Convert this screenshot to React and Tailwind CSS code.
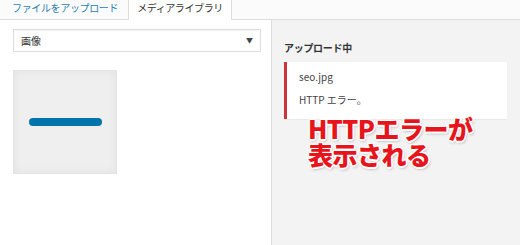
export default function App() {
  const font = { fontFamily: '"Noto Sans CJK JP", "Noto Sans", sans-serif' };

  return (
    <div className="w-[520px] h-[245px] flex flex-col bg-white overflow-hidden" style={font}>
      {/* tabs */}
      <div className="h-[20px] flex items-end bg-[#fbfbfb] border-b border-[#dddddd]">
        <div className="h-[19px] pl-[12px] pr-[10px] text-[10px] leading-[16px] tracking-[-0.35px] text-[#2a7fb0]">
          ファイルをアップロード
        </div>
        <div className="h-[20px] -mb-px px-[8px] bg-white border-x border-[#dddddd] text-[10px] leading-[16px] tracking-[-0.4px] text-[#333]">
          メディアライブラリ
        </div>
      </div>

      <div className="flex-1 flex">
        {/* library */}
        <div className="w-[272px] border-r border-[#dddddd] pl-[13px] pr-[10px] pt-[9px]">
          <div className="h-[23px] w-[248px] flex items-center justify-between px-[7px] border border-[#dddddd] bg-white shadow-[inset_0_1px_2px_rgba(0,0,0,0.05)]">
            <span className="text-[10px] text-[#333]">画像</span>
            <span className="text-[7px] text-[#444]">▼</span>
          </div>
          <div className="mt-[18px] w-[104px] h-[104px] flex items-center justify-center bg-[#efefef] border border-[#e4e4e4] shadow-[inset_0_0_10px_rgba(0,0,0,0.06)]">
            <div className="w-[73px] h-[8px] rounded-full bg-[#0073aa]" />
          </div>
        </div>

        {/* uploading */}
        <div className="relative flex-1 bg-[#f3f3f3] pl-[12px] pr-[13px] pt-[21px]">
          <div className="text-[10px] leading-[14px] font-semibold tracking-[-0.3px] text-[#333]">アップロード中</div>
          <div className="mt-[7px] h-[57px] bg-white border-l-[3px] border-[#c9353b] pl-[12px] pt-[8px] shadow-[0_1px_1px_rgba(0,0,0,0.04)] text-[10px] text-[#444]">
            <div className="leading-[14px]">seo.jpg</div>
            <div className="mt-[9px] leading-[14px]">HTTP エラー。</div>
          </div>
          <div
            className="absolute left-[36px] top-[95px] text-[25px] leading-[26px] font-black text-[#e8141c] tracking-[-0.5px]"
            style={{
              textShadow:
                "1.5px 0 0 #fff, -1.5px 0 0 #fff, 0 1.5px 0 #fff, 0 -1.5px 0 #fff, 1px 1px 0 #fff, -1px -1px 0 #fff, 1px -1px 0 #fff, -1px 1px 0 #fff, 1px 2px 3px rgba(0,0,0,0.35)",
            }}
          >
            <div>HTTPエラーが</div>
            <div>表示される</div>
          </div>
        </div>
      </div>
    </div>
  );
}
